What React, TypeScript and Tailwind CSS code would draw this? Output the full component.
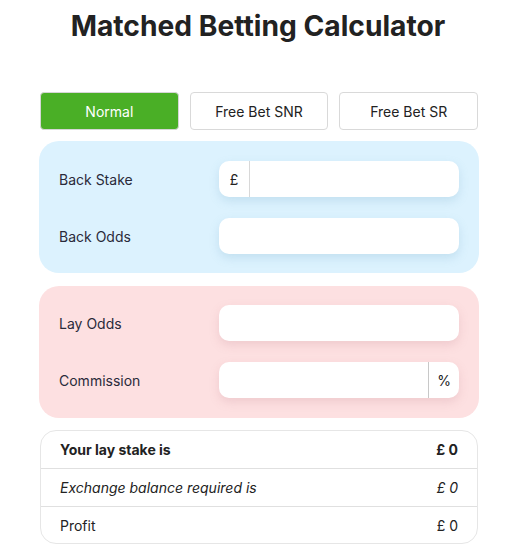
import React, { useState } from 'react';

const tabs = ['Normal', 'Free Bet SNR', 'Free Bet SR'];

const App: React.FC = () => {
  const [mode, setMode] = useState('Normal');

  return (
    <div className="min-h-screen bg-white font-['Inter','Liberation_Sans',sans-serif] text-[#222]">
      <h1 className="pt-[6px] pl-[6px] text-center text-[28.2px] font-bold leading-[40px] text-[#222]">
        Matched Betting Calculator
      </h1>

      <div className="ml-[39px] mt-[46px] w-[440px]">
        <div className="grid grid-cols-3 gap-[11px] px-[1px]">
          {tabs.map((t) => (
            <button
              key={t}
              onClick={() => setMode(t)}
              className={
                t === mode
                  ? 'h-[38px] rounded-[4px] border border-[#d6d6d6] bg-[#4aaf26] text-[14px] text-white'
                  : 'h-[38px] rounded-[4px] border border-[#d9d9d9] bg-white text-[14px] text-[#222]'
              }
            >
              {t}
            </button>
          ))}
        </div>

        <div className="mt-[11px] flex flex-col gap-[21px] rounded-[20px] bg-[#dcf2fe] px-[20px] pt-[20px] pb-[19px]">
          <div className="flex items-center justify-between">
            <span className="text-[14px] text-[#2a2a3a]">Back Stake</span>
            <div className="flex h-[36px] w-[240px] overflow-hidden rounded-[10px] bg-white shadow-[0_4px_10px_rgba(120,170,200,0.25)]">
              <span className="flex w-[31px] shrink-0 items-center justify-center border-r border-[#d8d8d8] text-[14px]">£</span>
              <input className="min-w-0 flex-1 px-3 text-[14px] outline-none" />
            </div>
          </div>
          <div className="flex items-center justify-between">
            <span className="text-[14px] text-[#2a2a3a]">Back Odds</span>
            <input className="h-[36px] w-[240px] rounded-[10px] bg-white px-3 text-[14px] shadow-[0_4px_10px_rgba(120,170,200,0.25)] outline-none" />
          </div>
        </div>

        <div className="mt-[13px] flex flex-col gap-[21px] rounded-[20px] bg-[#fde0e1] px-[20px] pt-[19px] pb-[20px]">
          <div className="flex items-center justify-between">
            <span className="text-[14px] text-[#2a2a3a]">Lay Odds</span>
            <input className="h-[36px] w-[240px] rounded-[10px] bg-white px-3 text-[14px] shadow-[0_4px_10px_rgba(200,140,150,0.25)] outline-none" />
          </div>
          <div className="flex items-center justify-between">
            <span className="text-[14px] text-[#2a2a3a]">Commission</span>
            <div className="flex h-[36px] w-[240px] overflow-hidden rounded-[10px] bg-white shadow-[0_4px_10px_rgba(200,140,150,0.25)]">
              <input className="min-w-0 flex-1 px-3 text-[14px] outline-none" />
              <span className="flex w-[31px] shrink-0 items-center justify-center border-l border-[#c8c8c8] text-[14px]">%</span>
            </div>
          </div>
        </div>

        <div className="mx-[1px] mt-[12px] overflow-hidden rounded-[16px] border border-[#e6e6e6] text-[14px]">
          <div className="flex h-[37px] items-center justify-between px-[19px] font-bold">
            <span>Your lay stake is</span>
            <span>£ 0</span>
          </div>
          <div className="flex h-[38px] items-center justify-between border-t border-[#e0e0e0] px-[19px] italic">
            <span>Exchange balance required is</span>
            <span>£ 0</span>
          </div>
          <div className="flex h-[37px] items-center justify-between border-t border-[#e0e0e0] px-[19px]">
            <span>Profit</span>
            <span>£ 0</span>
          </div>
        </div>
      </div>
    </div>
  );
};

export default App;
